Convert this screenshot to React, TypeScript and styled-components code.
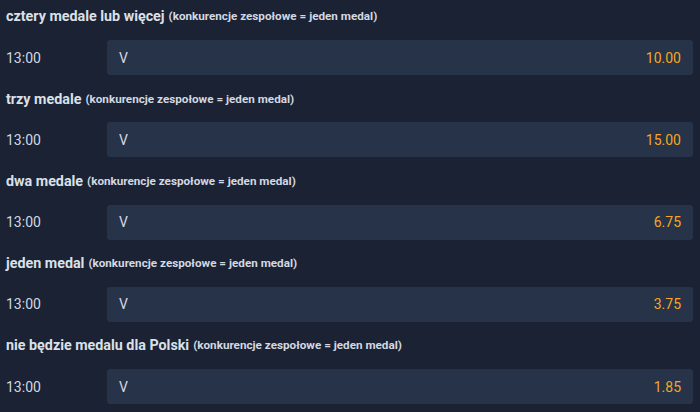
import React from "react";
import styled, { createGlobalStyle } from "styled-components";

const GlobalStyle = createGlobalStyle`
  html, body {
    margin: 0;
    padding: 0;
    background: #1a2233;
    overflow: hidden;
  }
  body {
    font-family: Roboto, "Noto Sans", "Liberation Sans", sans-serif;
    color: #d8dde6;
  }
`;

const Market = styled.div`
  display: flex;
  flex-direction: column;
  padding: 0 7px 0 6px;
  margin-top: -7.25px;
`;

const Section = styled.section`
  display: flex;
  flex-direction: column;
`;

const Heading = styled.div`
  height: 47.25px;
  display: flex;
  align-items: center;
  gap: 4px;
  white-space: nowrap;
`;

const Title = styled.span`
  font-size: 14.3px;
  font-weight: 700;
  color: #dbe0e8;
`;

const Note = styled.span`
  font-size: 11.7px;
  font-weight: 700;
  color: #d3d8e1;
`;

const Row = styled.div`
  display: flex;
  align-items: center;
  height: 35px;
`;

const Time = styled.span`
  width: 101px;
  flex-shrink: 0;
  font-size: 14px;
  color: #d3d8e1;
`;

const Pick = styled.div`
  flex: 1;
  height: 100%;
  display: flex;
  align-items: center;
  justify-content: space-between;
  padding: 0 12px;
  background: #273349;
  border-radius: 3px;
  font-size: 14px;
  cursor: pointer;
`;

const Label = styled.span`
  color: #d3d8e1;
`;

const Odds = styled.span`
  color: #f5a623;
`;

const markets = [
  { title: "cztery medale lub więcej", odds: "10.00" },
  { title: "trzy medale", odds: "15.00" },
  { title: "dwa medale", odds: "6.75" },
  { title: "jeden medal", odds: "3.75" },
  { title: "nie będzie medalu dla Polski", odds: "1.85" },
];

export default function App() {
  return (
    <>
      <GlobalStyle />
      <Market>
        {markets.map((m) => (
          <Section key={m.title}>
            <Heading>
              <Title>{m.title}</Title>
              <Note>(konkurencje zespołowe = jeden medal)</Note>
            </Heading>
            <Row>
              <Time>13:00</Time>
              <Pick>
                <Label>V</Label>
                <Odds>{m.odds}</Odds>
              </Pick>
            </Row>
          </Section>
        ))}
      </Market>
    </>
  );
}
